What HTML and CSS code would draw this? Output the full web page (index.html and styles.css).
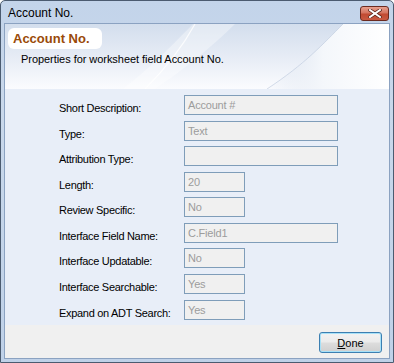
FILE: index.html
```html
<!DOCTYPE html>
<html>
<head>
<meta charset="utf-8">
<link rel="stylesheet" href="styles.css">
</head>
<body>
<div class="window">
  <div class="titlebar">
    <span class="title">Account No.</span>
    <button class="close" aria-label="Close">
      <svg width="14" height="9" viewBox="0 0 14 9">
        <path d="M2 1 L12 8 M12 1 L2 8" stroke="#5a2218" stroke-width="3.4" stroke-linecap="square" fill="none"/>
        <path d="M2 1 L12 8 M12 1 L2 8" stroke="#ffffff" stroke-width="2" stroke-linecap="square" fill="none"/>
      </svg>
    </button>
  </div>
  <div class="client">
    <div class="header">
      <svg class="swoosh" width="386" height="65" viewBox="0 0 386 65" preserveAspectRatio="none">
        <defs>
          <linearGradient id="bg" x1="0" y1="0" x2="0" y2="1">
            <stop offset="0" stop-color="#d3deed"/>
            <stop offset="0.55" stop-color="#e8edf6"/>
            <stop offset="1" stop-color="#fbfcfe"/>
          </linearGradient>
          <linearGradient id="rt" x1="0" y1="0" x2="1" y2="0">
            <stop offset="0" stop-color="#d9e1ee" stop-opacity="0"/>
            <stop offset="0.45" stop-color="#f4f7fb"/>
            <stop offset="1" stop-color="#ffffff"/>
          </linearGradient>
        </defs>
        <rect width="386" height="65" fill="url(#bg)"/>
        <path d="M118 65 C150 40 170 18 188 0 L230 0 C205 25 175 48 150 65 Z" fill="#ffffff" opacity="0.35"/>
        <path d="M140 65 C160 45 178 22 190 0" stroke="#ffffff" stroke-width="1.2" fill="none" opacity="0.8"/>
        <path d="M262 65 C300 40 318 20 338 0 L386 0 L386 65 Z" fill="url(#rt)"/>
        <path d="M262 65 C300 40 318 20 338 0" stroke="#c2cde0" stroke-width="1" fill="none" opacity="0.7"/>
      </svg>
      <div class="header-text">
        <div class="pill">Account No.</div>
        <div class="subtitle">Properties for worksheet field Account No.</div>
      </div>
    </div>
    <div class="form">
      <div class="row"><span class="label">Short Description:</span><span class="field wide">Account #</span></div>
      <div class="row"><span class="label">Type:</span><span class="field wide">Text</span></div>
      <div class="row"><span class="label">Attribution Type:</span><span class="field wide"></span></div>
      <div class="row"><span class="label">Length:</span><span class="field short">20</span></div>
      <div class="row"><span class="label">Review Specific:</span><span class="field short">No</span></div>
      <div class="row"><span class="label">Interface Field Name:</span><span class="field wide">C.Field1</span></div>
      <div class="row"><span class="label">Interface Updatable:</span><span class="field short">No</span></div>
      <div class="row"><span class="label">Interface Searchable:</span><span class="field short">Yes</span></div>
      <div class="row"><span class="label">Expand on ADT Search:</span><span class="field short">Yes</span></div>
    </div>
    <div class="footer">
      <button class="done"><u>D</u>one</button>
    </div>
  </div>
</div>
</body>
</html>
```
FILE: styles.css
```css
html, body {
  margin: 0;
  padding: 0;
  background: #ffffff;
}
.window {
  box-sizing: border-box;
  width: 394px;
  height: 363px;
  border: 1px solid #4b5b70;
  border-radius: 5px 5px 0 0;
  background: linear-gradient(to bottom, #c3d4ea 0%, #c9d8eb 30%, #bfd1e8 100%);
  display: flex;
  flex-direction: column;
  font-family: "Liberation Sans", Arial, sans-serif;
  font-size: 11px;
  color: #000000;
}
.titlebar {
  height: 22px;
  display: flex;
  align-items: center;
  justify-content: space-between;
  padding: 0 4px 0 7px;
}
.title {
  font-size: 12px;
  color: #000000;
  padding-top: 1px;
}
.close {
  width: 29px;
  height: 15px;
  margin-top: 2px;
  padding: 0;
  border: 1px solid #6b2a20;
  border-radius: 3px;
  background: linear-gradient(to bottom, #e8a08e 0%, #d47460 45%, #c14a32 55%, #c85a42 100%);
  display: flex;
  align-items: center;
  justify-content: center;
}
.client {
  margin: 0 3px 3px 3px;
  flex: 1;
  display: flex;
  flex-direction: column;
  background: #f0f0f0;
  border: 1px solid #8ba2c1;
}
.header {
  height: 65px;
  position: relative;
  overflow: hidden;
}
.swoosh {
  position: absolute;
  left: 0;
  top: 0;
}
.header-text {
  position: relative;
  padding: 4px 0 0 3px;
}
.pill {
  display: inline-block;
  background: #ffffff;
  border-radius: 6px;
  padding: 3px 12px 3px 5px;
  font-weight: bold;
  font-size: 13px;
  line-height: 15px;
  color: #9a4a08;
}
.subtitle {
  padding: 4px 0 0 13px;
  font-size: 11px;
  line-height: 13px;
  letter-spacing: -0.05px;
}
.form {
  height: 236px;
  box-sizing: border-box;
  background: #e8eef8;
  padding: 6px 0 0 54px;
  display: flex;
  flex-direction: column;
}
.row {
  height: 26px;
  display: flex;
  align-items: flex-start;
}
.label {
  width: 125px;
  padding-top: 7px;
  line-height: 13px;
  letter-spacing: -0.3px;
}
.field {
  box-sizing: border-box;
  height: 20px;
  border: 1px solid #7f9db9;
  background: #f0f0f0;
  color: #9c9c9c;
  padding: 2px 0 0 3px;
  line-height: 14px;
  letter-spacing: -0.2px;
}
.wide {
  width: 154px;
}
.short {
  width: 61px;
}
.footer {
  flex: 1;
  display: flex;
  justify-content: flex-end;
  align-items: flex-start;
  padding: 7px 7px 0 0;
}
.done {
  width: 63px;
  height: 21px;
  padding: 0;
  border: 1px solid #3c7fb1;
  border-radius: 3px;
  box-shadow: inset 0 0 0 1px #a7e1f8;
  background: linear-gradient(to bottom, #f2f2f2 0%, #ebebeb 48%, #dddddd 52%, #cfcfcf 100%);
  font-family: "Liberation Sans", Arial, sans-serif;
  font-size: 11px;
  color: #000000;
}
```
